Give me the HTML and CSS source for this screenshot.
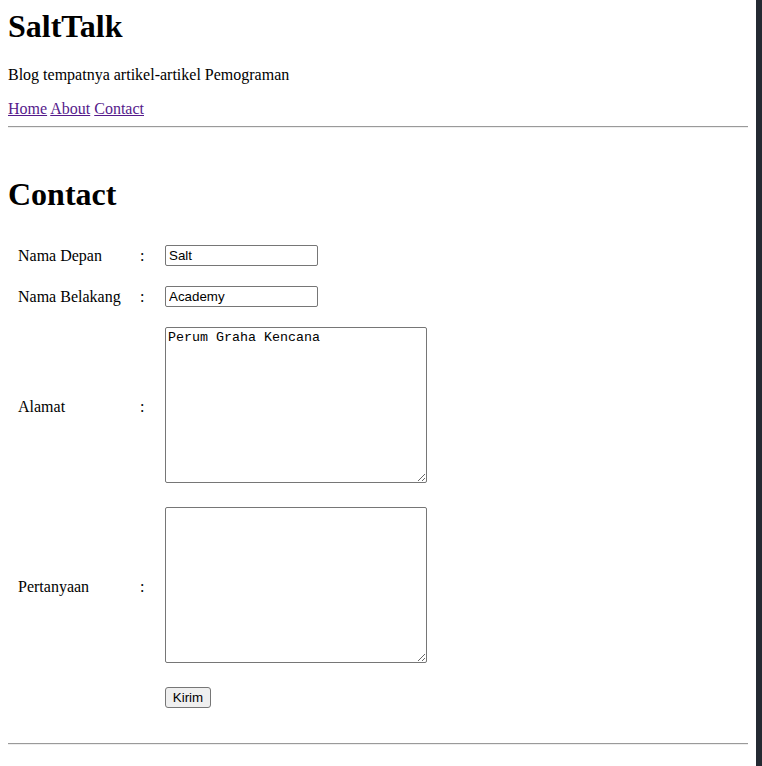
FILE: index.html
```html
<!DOCTYPE html>
<html lang="id">
<head>
<meta charset="utf-8">
<title>SaltTalk - Contact</title>
<link rel="stylesheet" href="styles.css">
</head>
<body>
<div class="page">
  <header class="site-header">
    <h1 class="brand">SaltTalk</h1>
    <p class="tagline">Blog tempatnya artikel-artikel Pemograman</p>
    <nav class="nav"><a href="#home">Home</a> <a href="#about">About</a> <a href="#contact">Contact</a></nav>
  </header>
  <hr class="rule rule-top">
  <main class="content">
    <h1 class="page-title">Contact</h1>
    <form class="contact-form">
      <table class="form-table">
        <tr>
          <td class="cell label">Nama Depan</td>
          <td class="cell colon">:</td>
          <td class="cell field"><input class="text-input" type="text" value="Salt"></td>
        </tr>
        <tr>
          <td class="cell label">Nama Belakang</td>
          <td class="cell colon">:</td>
          <td class="cell field"><input class="text-input" type="text" value="Academy"></td>
        </tr>
        <tr>
          <td class="cell label">Alamat</td>
          <td class="cell colon">:</td>
          <td class="cell field"><textarea class="text-area">Perum Graha Kencana</textarea></td>
        </tr>
        <tr>
          <td class="cell label">Pertanyaan</td>
          <td class="cell colon">:</td>
          <td class="cell field"><textarea class="text-area"></textarea></td>
        </tr>
        <tr>
          <td class="cell label"></td>
          <td class="cell colon"></td>
          <td class="cell field"><button class="submit" type="button">Kirim</button></td>
        </tr>
      </table>
    </form>
  </main>
  <hr class="rule rule-bottom">
</div>
</body>
</html>
```

FILE: styles.css
```css
html {
  background: #242a32;
  margin: 0;
  padding: 0;
}

body {
  margin: 0;
  padding: 0;
  width: 756px;
  min-height: 766px;
  background: #ffffff;
  color: #000000;
  font-family: "Liberation Serif", "Times New Roman", serif;
  font-size: 16px;
}

.page {
  display: flow-root;
  padding: 8px;
}

.brand {
  margin: 0 0 21px 0;
  font-size: 32px;
  line-height: 37px;
  font-weight: bold;
}

.tagline {
  margin: 0 0 16px 0;
  line-height: 18px;
}

.nav {
  line-height: 18px;
}

.nav a {
  color: #551a8b;
  text-decoration: underline;
}

.rule {
  height: 0;
  border: 0;
  border-top: 1px solid #9a9a9a;
  border-bottom: 1px solid #eeeeee;
  margin: 0;
}

.rule-top {
  margin-top: 8px;
}

.page-title {
  margin: 48px 0 22px 0;
  font-size: 32px;
  line-height: 37px;
  font-weight: bold;
}

.contact-form {
  margin: 0 0 25px 0;
}

.form-table {
  border-collapse: collapse;
  border-spacing: 0;
  table-layout: fixed;
}

.cell {
  padding: 10px;
  vertical-align: middle;
  white-space: nowrap;
}

.label {
  width: 102px;
  min-width: 102px;
  max-width: 102px;
  text-align: left;
  overflow: visible;
}

.colon {
  width: 5px;
}

.field {
  width: 262px;
}

.text-input {
  box-sizing: border-box;
  width: 153px;
  height: 21px;
  margin: 0;
  padding: 1px 3px;
  border: 1px solid #767676;
  border-radius: 2px;
  font-family: "Liberation Sans", Arial, sans-serif;
  font-size: 13.33px;
  display: block;
}

.text-area {
  box-sizing: border-box;
  width: 262px;
  height: 156px;
  margin: 0 0 4px 0;
  padding: 2px;
  border: 1px solid #767676;
  border-radius: 2px;
  font-family: "Liberation Mono", "Courier New", monospace;
  font-size: 13.33px;
  line-height: 15px;
  display: block;
  resize: both;
  white-space: pre-wrap;
}

.submit {
  box-sizing: border-box;
  width: 46px;
  height: 21px;
  margin: 0;
  padding: 1px 6px;
  border: 1px solid #767676;
  border-radius: 3px;
  background: #efefef;
  color: #000;
  font-family: "Liberation Sans", Arial, sans-serif;
  font-size: 13.33px;
  display: block;
}
```
